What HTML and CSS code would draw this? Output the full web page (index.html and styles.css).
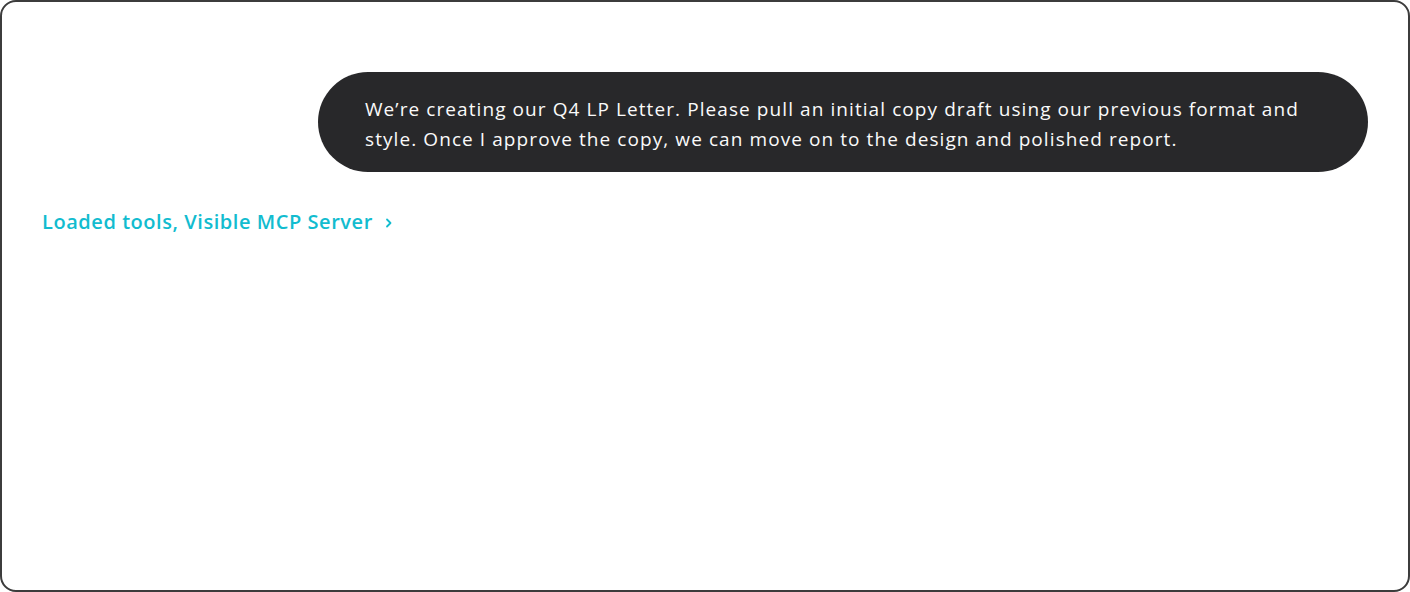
FILE: index.html
```html
<!DOCTYPE html>
<html>
<head>
<meta charset="utf-8">
<link rel="stylesheet" href="styles.css">
</head>
<body>
<div class="frame">
  <div class="bubble-row">
    <div class="bubble">We’re creating our Q4 LP Letter. Please pull an initial copy draft using our previous format and style. Once I approve the copy, we can move on to the design and polished report.</div>
  </div>
  <div class="tools-link">
    <span>Loaded tools, Visible MCP Server</span>
    <svg class="chev" width="8" height="10" viewBox="0 0 8 10"><path d="M2 1.5 L5.5 5 L2 8.5" fill="none" stroke="currentColor" stroke-width="1.8" stroke-linecap="round" stroke-linejoin="round"/></svg>
  </div>
</div>
</body>
</html>
```
FILE: styles.css
```css
html, body { margin: 0; padding: 0; background: #fff; }
.frame {
  box-sizing: border-box;
  width: 1410px;
  height: 592px;
  border: 2px solid #3c3c3c;
  border-radius: 16px;
  padding: 70px 40px 0 40px;
  font-family: "Open Sans", Lato, sans-serif;
}
.bubble-row { display: flex; justify-content: flex-end; }
.bubble {
  box-sizing: border-box;
  width: 1050px;
  height: 100px;
  padding: 22px 47px 0 47px;
  background: #28282a;
  color: #fafafa;
  border-radius: 50px;
  font-size: 19px;
  line-height: 30px;
  letter-spacing: 1.08px;
}
.tools-link {
  margin-top: 36px;
  display: flex;
  align-items: center;
  gap: 12px;
  color: #12bccf;
  font-size: 20px;
  font-weight: 600;
  line-height: 28px;
  letter-spacing: 0.55px;
}
.chev { display: block; margin-top: 1px; }
```
